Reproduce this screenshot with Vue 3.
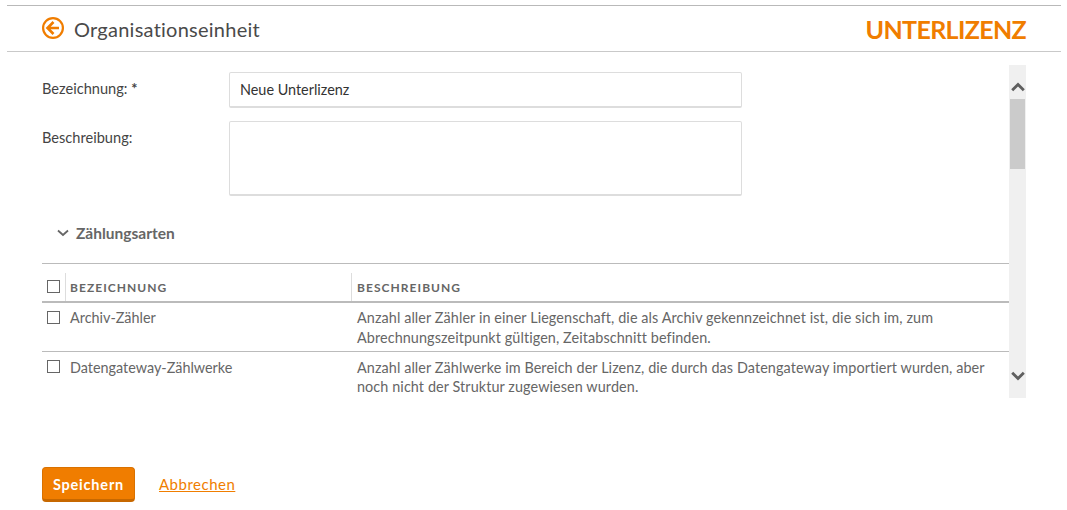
<script setup>
const rows = [
  { name: 'Archiv-Zähler', text: 'Anzahl aller Zähler in einer Liegenschaft, die als Archiv gekennzeichnet ist, die sich im, zum Abrechnungszeitpunkt gültigen, Zeitabschnitt befinden.' },
  { name: 'Datengateway-Zählwerke', text: 'Anzahl aller Zählwerke im Bereich der Lizenz, die durch das Datengateway importiert wurden, aber noch nicht der Struktur zugewiesen wurden.' }
]
</script>

<template>
  <div class="page">
    <header class="head">
      <div class="head-left">
        <svg class="back" width="22" height="22" viewBox="0 0 22 22">
          <circle cx="11" cy="11" r="9.9" fill="none" stroke="#f07d00" stroke-width="2.2" />
          <path d="M11.500 5 5.500 11l6 6M6 11h11" fill="none" stroke="#f07d00" stroke-width="2.600" />
        </svg>
        <span class="head-title">Organisationseinheit</span>
      </div>
      <span class="brand">UNTERLIZENZ</span>
    </header>

    <div class="scrollarea">
      <div class="content">
        <div class="field field-one">
          <label class="lab">Bezeichnung: <b class="star">*</b></label>
          <div class="input">Neue Unterlizenz</div>
        </div>
        <div class="field field-two">
          <label class="lab">Beschreibung:</label>
          <div class="input area"></div>
        </div>
        <div class="section">
          <svg width="12" height="8" viewBox="0 0 12 8">
            <path d="M1 1.500 6 6l5-4.500" fill="none" stroke="#666" stroke-width="1.800" />
          </svg>
          <span>Zählungsarten</span>
        </div>
        <div class="table">
          <div class="row thead">
            <div class="c1"><span class="box"></span></div>
            <div class="c2">BEZEICHNUNG</div>
            <div class="c3">BESCHREIBUNG</div>
          </div>
          <div v-for="r in rows" :key="r.name" class="row tbody">
            <div class="c1"><span class="box"></span></div>
            <div class="c2">{{ r.name }}</div>
            <div class="c3">{{ r.text }}</div>
          </div>
        </div>
      </div>
      <div class="bar">
        <svg class="arrow" width="14" height="10" viewBox="0 0 14 10">
          <path d="M1.200 8.200 7 2.400 12.800 8.200" fill="none" stroke="#5f5f5f" stroke-width="2.800" />
        </svg>
        <div class="thumb"></div>
        <svg class="arrow low" width="14" height="10" viewBox="0 0 14 10">
          <path d="M1.200 1.800 7 7.600 12.800 1.800" fill="none" stroke="#5f5f5f" stroke-width="2.800" />
        </svg>
      </div>
    </div>

    <footer class="foot">
      <button class="save">Speichern</button>
      <a class="cancel">Abbrechen</a>
    </footer>
  </div>
</template>

<style>
html, body { margin: 0; background: #fff; }
</style>

<style scoped>
.page {
  width: 1054px;
  margin-left: 7px;
  padding-top: 5px;
  font-family: "Lato", "Noto Sans", sans-serif;
  font-size: 14px;
  color: #555;
}
.head {
  height: 45px;
  border-top: 1px solid #b9b9b9;
  border-bottom: 1px solid #c9c9c9;
  display: flex;
  align-items: center;
  justify-content: space-between;
  padding: 0 35px;
}
.head-left { display: flex; align-items: center; gap: 10px; }
.back { display: block; margin-top: -2px; }
.head-title { font-size: 20px; letter-spacing: 0.25px; color: #4a4a4a; }
.brand { font-size: 25px; font-weight: 700; color: #f07d00; letter-spacing: -0.65px; }
.scrollarea {
  margin: 13px 35px 0;
  height: 333px;
  display: flex;
  width: 984px;
}
.content { flex: 1; min-width: 0; }
.field { display: flex; }
.field-one { margin-top: 7px; }
.field-two { margin-top: 13px; }
.lab { width: 187px; padding-top: 8px; color: #444; font-size: 14.6px; }
.star { font-weight: 700; }
.input {
  height: 33px;
  border: 1px solid #ddd;
  border-bottom: 2px solid #ddd;
  border-radius: 2px;
  padding-left: 10px;
  width: 501px;
  line-height: 33px;
  color: #333;
  font-size: 14.400px;
}
.area { height: 72px; }
.section {
  margin-top: 27px;
  padding-left: 15px;
  display: flex;
  align-items: center;
  gap: 7px;
  height: 20px;
  font-size: 15.500px;
  font-weight: 700;
  color: #666;
}
.table { margin-top: 20px; border-top: 1px solid #bbb; }
.row { display: flex; }
.thead {
  height: 37px;
  border-bottom: 2px solid #bbb;
  align-items: flex-end;
  font-size: 12px;
  font-weight: 700;
  letter-spacing: 1.050px;
  color: #666;
}
.thead > div { height: 28px; line-height: 30px; }
.thead .c2, .thead .c3 { border-left: 1px solid #ddd; padding-left: 4px; }
.thead .c3 { padding-left: 5px; }
.tbody { border-bottom: 1px solid #bbb; height: 48.400px; color: #666; line-height: 19.200px; font-size: 14.400px; }
.tbody:last-child { border-bottom: 0; }
.tbody > div { padding-top: 5.300px; }
.tbody .c3 { letter-spacing: 0.09px; padding-left: 6px; }
.c1 { width: 23px; padding-left: 5px; box-sizing: border-box; flex: none; }
.c2 { width: 286px; padding-left: 5px; box-sizing: border-box; flex: none; }
.c3 { flex: 1; padding: 0 20px 0 5px; }
.box {
  display: block;
  width: 11px;
  height: 11px;
  border: 1px solid #666;
  background: #fff;
}
.thead .box { margin-top: 7px; }
.tbody .box { margin-top: 2.500px; }
.bar {
  width: 17px;
  background: #f0f0f0;
  display: flex;
  flex-direction: column;
  align-items: center;
  flex: none;
}
.arrow { margin-top: 17px; display: block; }
.low { margin-top: 202px; }
.thumb { width: 15px; height: 70px; background: #cbcbcb; margin-top: 7px; }
.foot {
  margin: 69px 0 0 35px;
  display: flex;
  align-items: center;
  gap: 24px;
}
.save {
  width: 93px;
  height: 35px;
  padding-top: 2px;
  background: #f07d00;
  border: 1px solid #d97100;
  border-bottom: 3px solid #c76800;
  border-radius: 4px;
  color: #fff;
  font: 700 14.500px "Lato", sans-serif;
  letter-spacing: 0.8px;
}
.cancel {
  color: #f07d00;
  text-decoration: underline;
  font-size: 15px;
  letter-spacing: 0.5px;
  margin-bottom: 2px;
}
</style>
